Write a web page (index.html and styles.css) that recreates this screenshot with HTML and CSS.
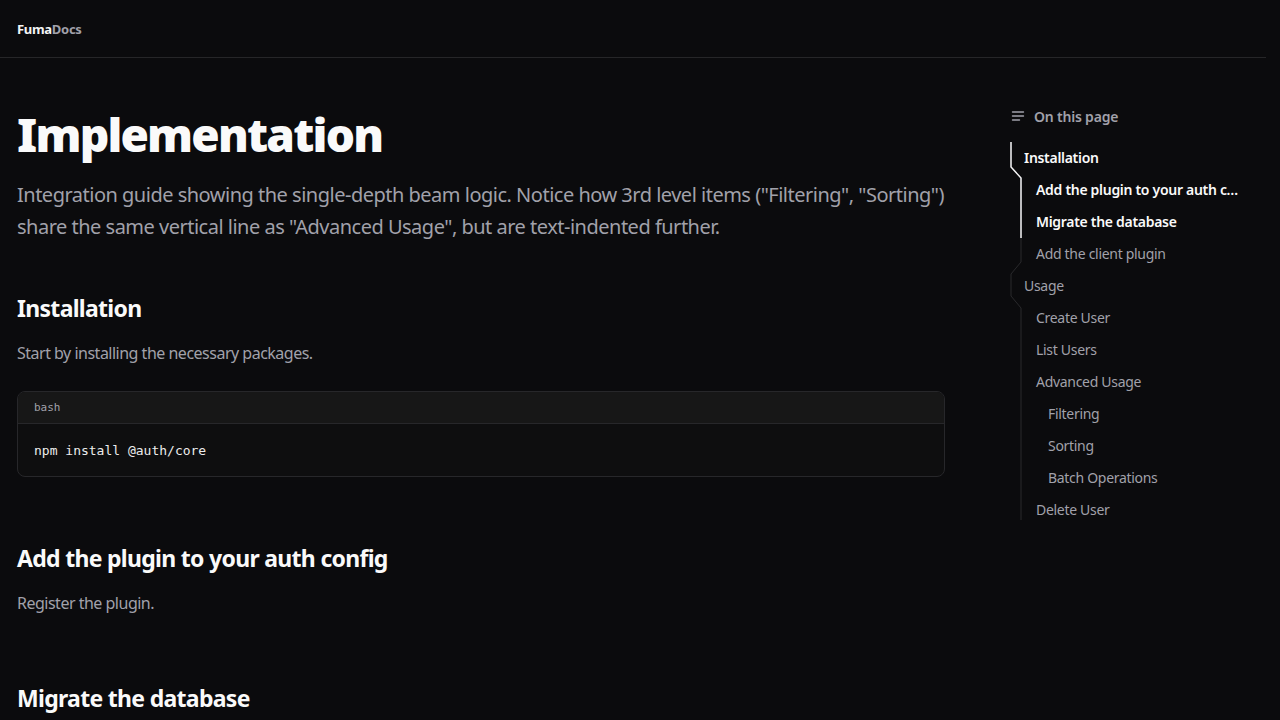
FILE: index.html
```html
<!DOCTYPE html>
<html lang="en">
<head>
<meta charset="utf-8">
<title>Implementation</title>
<link rel="stylesheet" href="styles.css">
</head>
<body>
<header class="topbar">
  <a class="brand" href="#"><span class="brand-a">Fuma</span><span class="brand-b">Docs</span></a>
</header>
<div class="layout">
  <main class="content">
    <h1 class="title">Implementation</h1>
    <p class="lead">Integration guide showing the single-depth beam logic. Notice how 3rd level items ("Filtering", "Sorting") share the same vertical line as "Advanced Usage", but are text-indented further.</p>

    <h2 class="h2">Installation</h2>
    <p class="para">Start by installing the necessary packages.</p>
    <div class="code">
      <div class="code-head">bash</div>
      <pre class="code-body">npm install @auth/core</pre>
    </div>

    <h2 class="h2">Add the plugin to your auth config</h2>
    <p class="para">Register the plugin.</p>

    <h2 class="h2">Migrate the database</h2>
  </main>
  <aside class="toc">
    <div class="toc-title">
      <svg class="toc-icon" width="14" height="14" viewBox="0 0 14 14" fill="none" stroke="currentColor" stroke-width="1.4" stroke-linecap="round"><path d="M1.5 3h11M1.5 7h11M1.5 11h7"/></svg>
      <span>On this page</span>
    </div>
    <div class="toc-list">
      <svg class="beam" width="14" height="378" viewBox="0 0 14 378" fill="none">
        <path d="M1 0V25L11 36V120L1 132V154L11 166V378" stroke="#2a2a2c" stroke-width="1"/>
        <path d="M1 0V25L11 36V96" stroke="#f4f4f5" stroke-width="1.5"/>
      </svg>
      <a class="toc-item l1 active" href="#">Installation</a>
      <a class="toc-item l2 active" href="#">Add the plugin to your auth config</a>
      <a class="toc-item l2 active" href="#">Migrate the database</a>
      <a class="toc-item l2" href="#">Add the client plugin</a>
      <a class="toc-item l1" href="#">Usage</a>
      <a class="toc-item l2" href="#">Create User</a>
      <a class="toc-item l2" href="#">List Users</a>
      <a class="toc-item l2" href="#">Advanced Usage</a>
      <a class="toc-item l3" href="#">Filtering</a>
      <a class="toc-item l3" href="#">Sorting</a>
      <a class="toc-item l3" href="#">Batch Operations</a>
      <a class="toc-item l2" href="#">Delete User</a>
    </div>
  </aside>
</div>
</body>
</html>
```
FILE: styles.css
```css
* { box-sizing: border-box; }
html, body { margin: 0; padding: 0; }
body {
  background: #0b0b0d;
  color: #f4f4f5;
  font-family: "Noto Sans", "Open Sans", "Liberation Sans", sans-serif;
  height: 720px;
  overflow: hidden;
}
a { text-decoration: none; color: inherit; }

.topbar {
  height: 58px;
  width: calc(100% - 14px);
  border-bottom: 1px solid #262628;
  display: flex;
  align-items: center;
  padding-left: 17px;
}
.brand { font-size: 13px; font-weight: 700; letter-spacing: -0.3px; }
.brand-a { color: #f4f4f5; }
.brand-b { color: #a1a1aa; }

.layout { display: flex; }
.content {
  width: 945px;
  padding: 47px 0 0 17px;
  flex: none;
}
.title {
  margin: 0;
  font-size: 46px;
  line-height: 58px;
  font-weight: 900;
  letter-spacing: -1.8px;
  color: #fafafa;
}
.lead {
  margin: 16px 0 0;
  font-size: 20px;
  line-height: 32px;
  color: #a1a1aa;
  letter-spacing: -0.5px;
}
.h2 {
  margin: 48px 0 0;
  font-size: 23px;
  line-height: 34px;
  font-weight: 700;
  letter-spacing: -0.7px;
  color: #fafafa;
}
.para {
  margin: 16px 0 0;
  font-size: 16px;
  line-height: 24px;
  color: #a1a1aa;
  letter-spacing: -0.5px;
}
.code {
  margin-top: 26px;
  border: 1px solid #27272a;
  border-radius: 8px;
  background: #0e0e0f;
  overflow: hidden;
}
.code-head {
  height: 32px;
  background: #171717;
  border-bottom: 1px solid #27272a;
  padding-left: 16px;
  display: flex;
  align-items: center;
  font-family: "DejaVu Sans Mono", "Liberation Mono", monospace;
  font-size: 11px;
  color: #a1a1aa;
}
.code-body {
  margin: 0;
  padding: 18px 16px 16px;
  font-family: "DejaVu Sans Mono", "Liberation Mono", monospace;
  font-size: 13px;
  line-height: 18px;
  color: #ececec;
}
.content .code + .h2 { margin-top: 64px; }
.content .para + .h2 { margin-top: 66px; }

.toc {
  margin-left: 65px;
  padding-top: 48px;
  width: 232px;
  flex: none;
}
.toc-title {
  display: flex;
  align-items: center;
  gap: 9px;
  height: 20px;
  font-size: 14px;
  font-weight: 600;
  color: #a1a1aa;
  letter-spacing: -0.2px;
  padding-left: 1px;
}
.toc-icon { flex: none; }
.toc-list {
  position: relative;
  margin-top: 16px;
  display: flex;
  flex-direction: column;
}
.beam { position: absolute; left: 0; top: 0; }
.toc-item {
  height: 32px;
  display: block;
  line-height: 32px;
  font-size: 14px;
  color: #a1a1aa;
  white-space: nowrap;
  overflow: hidden;
  text-overflow: ellipsis;
  letter-spacing: -0.3px;
}
.toc-item.active { color: #fafafa; font-weight: 600; }
.l1 { padding-left: 14px; }
.l2 { padding-left: 26px; }
.l3 { padding-left: 38px; }
```
